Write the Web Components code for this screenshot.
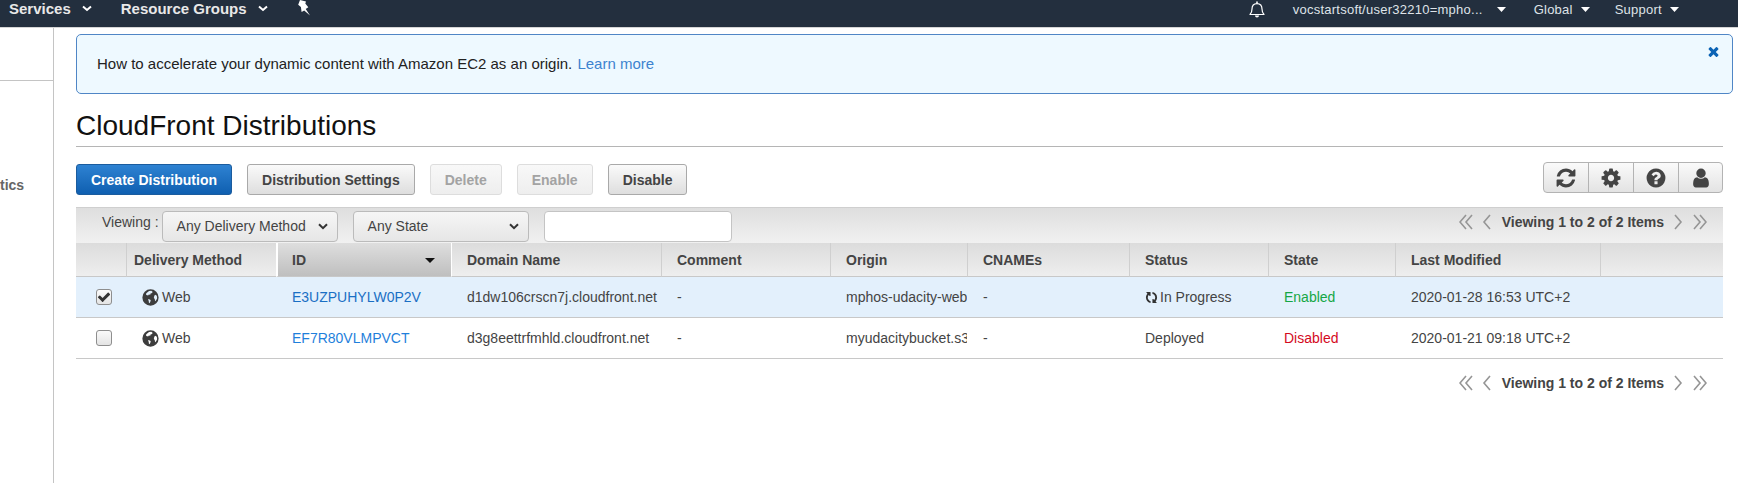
<!DOCTYPE html>
<html>
<head>
<meta charset="utf-8">
<title>CloudFront Distributions</title>
<style>
  html, body { margin: 0; height: 100%; overflow: hidden; background: #fff; }
  body { font-family: "Liberation Sans", Arial, sans-serif; color: #444; display: flex; flex-direction: column; }
</style>
</head>
<body>
<aws-nav></aws-nav>
<aws-shell>
  <aws-sidebar slot="side"></aws-sidebar>
  <aws-banner>How to accelerate your dynamic content with Amazon EC2 as an origin. <a>Learn more</a></aws-banner>
  <aws-title>CloudFront Distributions</aws-title>
  <aws-toolbar>
    <aws-button variant="primary">Create Distribution</aws-button>
    <aws-button>Distribution Settings</aws-button>
    <aws-button variant="disabled">Delete</aws-button>
    <aws-button variant="disabled">Enable</aws-button>
    <aws-button>Disable</aws-button>
  </aws-toolbar>
  <dist-table></dist-table>
  <aws-pager class="bottom"></aws-pager>
</aws-shell>

<script>
const ICONS = {
  refresh: 'M1639 1056q0 5-1 7-64 268-268 434.5t-478 166.5q-146 0-282.5-55t-243.5-157l-129 129q-19 19-45 19t-45-19-19-45v-448q0-26 19-45t45-19h448q26 0 45 19t19 45-19 45l-137 137q71 66 161 102t187 36q134 0 250-65t186-179q11-17 53-117 8-23 30-23h192q13 0 22.5 9.5t9.5 22.5zm25-800v448q0 26-19 45t-45 19h-448q-26 0-45-19t-19-45 19-45l138-138q-148-137-349-137-134 0-250 65t-186 179q-11 17-53 117-8 23-30 23h-199q-13 0-22.5-9.5t-9.5-22.5v-7q65-268 270-434.5t480-166.5q146 0 284 55.5t245 156.5l130-129q19-19 45-19t45 19 19 45z',
  cog: 'M1152 896q0-106-75-181t-181-75-181 75-75 181 75 181 181 75 181-75 75-181zm512-109v222q0 12-8 23t-20 13l-185 28q-19 54-39 91 35 50 107 138 10 12 10 25t-9 23q-27 37-99 108t-94 71q-12 0-26-9l-138-108q-44 23-91 38-16 136-29 186-7 28-36 28h-222q-14 0-24.5-8.5t-11.5-21.5l-28-184q-49-16-90-37l-141 107q-10 9-25 9-14 0-25-11-126-114-165-168-7-10-7-23 0-12 8-23 15-21 51-66.5t54-70.5q-27-50-41-99l-183-27q-13-2-21-12.5t-8-23.5v-222q0-12 8-23t19-13l186-28q14-46 39-92-40-57-107-138-10-12-10-24 0-10 9-23 26-36 98.5-107.5t94.5-71.5q13 0 26 10l138 107q44-23 91-38 16-136 29-186 7-28 36-28h222q14 0 24.5 8.5t11.5 21.5l28 184q49 16 90 37l142-107q9-9 24-9 13 0 25 10 129 119 165 170 7 8 7 22 0 12-8 23-15 21-51 66.5t-54 70.5q26 50 41 98l183 28q13 2 21 12.5t8 23.5z',
  help: 'M1024 1376v-192q0-14-9-23t-23-9h-192q-14 0-23 9t-9 23v192q0 14 9 23t23 9h192q14 0 23-9t9-23zm256-672q0-88-55.5-163t-138.5-116-170-41q-243 0-371 213-15 24 8 42l132 100q7 6 19 6 16 0 25-12 53-68 86-92 34-24 86-24 48 0 85.5 26t37.5 59q0 38-20 61t-68 45q-63 28-115.5 86.5t-52.5 125.5v36q0 14 9 23t23 9h192q14 0 23-9t9-23q0-19 21.5-49.5t54.5-49.5q32-18 49-28.5t46-35 44.5-48 28-60.5 12.5-81zm384 192q0 209-103 385.5t-279.5 279.5-385.5 103-385.5-103-279.5-279.5-103-385.5 103-385.5 279.5-279.5 385.5-103 385.5 103 279.5 279.5 103 385.5z',
  user: 'M1536 1399q0 109-62.5 187t-150.5 78h-854q-88 0-150.5-78t-62.5-187q0-85 8.5-160.5t31.5-152 58.5-131 94-89 134.5-34.5q131 128 313 128t313-128q76 0 134.5 34.5t94 89 58.5 131 31.5 152 8.5 160.5zm-256-887q0 159-112.5 271.5t-271.5 112.5-271.5-112.5-112.5-271.5 112.5-271.5 271.5-112.5 271.5 112.5 112.5 271.5z',
  times: 'M1490 1322q0 40-28 68l-136 136q-28 28-68 28t-68-28l-294-294-294 294q-28 28-68 28t-68-28l-136-136q-28-28-28-68t28-68l294-294-294-294q-28-28-28-68t28-68l136-136q28-28 68-28t68 28l294 294 294-294q28-28 68-28t68 28l136 136q28 28 28 68t-28 68l-294 294 294 294q28 28 28 68z',
  check: 'M1671 566q0 40-28 68l-724 724-136 136q-28 28-68 28t-68-28l-136-136-362-362q-28-28-28-68t28-68l136-136q28-28 68-28t68 28l294 295 656-657q28-28 68-28t68 28l136 136q28 28 28 68z',
  // globe: dark disc with small white land shapes cut out
  globe: 'M896 128a768 768 0 1 0 0 1536a768 768 0 1 0 0-1536zM760 290l210-20 120 90-40 100-150 50-30 120-130-10-70 90-170-60-30-100 110-130zM1260 700l150-60 100 150 10 190-110 210-80 60-30-190-90-150zM680 1050l170 30 70 110-60 150-60 90-60-70-10-160-70-90z'
};

class FaIcon extends HTMLElement {
  connectedCallback() {
    const size = this.getAttribute('size') || 16;
    this.attachShadow({ mode: 'open' }).innerHTML = `
      <style>
        :host { display: inline-flex; width: ${size}px; height: ${size}px; flex: none; }
        svg { width: 100%; height: 100%; display: block; fill: currentColor; fill-rule: evenodd; }
      </style>
      <svg viewBox="0 0 1792 1792"><path d="${ICONS[this.getAttribute('name')]}"/></svg>`;
  }
}
customElements.define('fa-icon', FaIcon);

class AwsNav extends HTMLElement {
  connectedCallback() {
    const caret = '<svg class="caret" width="9" height="5" viewBox="0 0 9 5"><path d="M0 0h9L4.5 5z"/></svg>';
    const chev = '<svg class="chev" width="10" height="7" viewBox="0 0 10 7"><path d="M1 1.5l4 3.5 4-3.5" fill="none" stroke="#fff" stroke-width="2"/></svg>';
    this.attachShadow({ mode: 'open' }).innerHTML = `
      <style>
        :host { display: flex; flex: none; height: 28px; box-sizing: border-box; background: #232f3e; color: #fff;
                border-bottom: 1px solid #d5d5d5; padding: 0 0 9px 9px; align-items: center; }
        .main { font-size: 15px; font-weight: bold; color: #e8e8e8; display: flex; align-items: center; margin-bottom: 2px; }
        .chev { margin-left: 11px; }
        .groups { margin-left: 29px; }
        .pin { margin-left: 29px; margin-bottom: 2px; }
        .right { margin-left: auto; display: flex; align-items: center; font-size: 13px; color: #dfe3e8; letter-spacing: 0.25px; }
        .caret { fill: #fff; margin-left: 8px; }
        .caret.first { margin-left: 14px; }
        .caret.last { margin-right: 59px; }
        .bell { margin-right: 28px; }
        .global { margin-left: 28px; }
        .support { margin-left: 25px; }
        span { white-space: nowrap; }
      </style>
      <span class="main">Services${chev}</span>
      <span class="main groups">Resource Groups${chev}</span>
      <svg class="pin" width="14" height="16" viewBox="0 0 14 16"><path d="M3 0l6 1.6-.7 2 3 3.6-2.6 1.8L13 15.5 7.2 10.4 4.6 12l-.7-5L1.2 4.8z" fill="#fff"/></svg>
      <div class="right">
        <svg class="bell" width="16" height="17" viewBox="0 0 16 17"><path d="M1 13.5c1.6-1.6 2-3 2-5.5 0-3 1.8-5.4 5-5.4s5 2.4 5 5.4c0 2.5.4 3.9 2 5.5z" fill="none" stroke="#fff" stroke-width="1.2" stroke-linejoin="round"/><path d="M6 14.5h4c0 1.2-.9 2-2 2s-2-.8-2-2zM7.2 1a.8.8 0 0 1 1.6 0v1.6H7.2z" fill="#fff"/></svg>
        <span>vocstartsoft/user32210=mpho...</span>${caret.replace('"caret"', '"caret first"')}
        <span class="global">Global</span>${caret}
        <span class="support">Support</span>${caret.replace('"caret"', '"caret last"')}
      </div>`;
  }
}
customElements.define('aws-nav', AwsNav);

class AwsShell extends HTMLElement {
  connectedCallback() {
    this.attachShadow({ mode: 'open' }).innerHTML = `
      <style>
        :host { display: flex; flex: 1; min-height: 0; }
        main { flex: 1; min-width: 0; padding: 6px 15px 0 22px; display: flex; flex-direction: column; }
      </style>
      <slot name="side"></slot>
      <main><slot></slot></main>`;
  }
}
customElements.define('aws-shell', AwsShell);

class AwsSidebar extends HTMLElement {
  connectedCallback() {
    this.attachShadow({ mode: 'open' }).innerHTML = `
      <style>
        :host { display: block; flex: none; width: 53px; border-right: 1px solid #c4c4c4; overflow: hidden; }
        .top { height: 52px; border-bottom: 1px solid #c4c4c4; }
        .item { margin-top: 96px; font-size: 14px; font-weight: bold; color: #666; line-height: 16px; }
      </style>
      <div class="top"></div>
      <div class="item">tics</div>`;
  }
}
customElements.define('aws-sidebar', AwsSidebar);

class AwsBanner extends HTMLElement {
  connectedCallback() {
    this.attachShadow({ mode: 'open' }).innerHTML = `
      <style>
        :host { display: flex; position: relative; height: 60px; box-sizing: border-box; margin-right: -10px; padding: 0 20px 2px;
                align-items: center; background: #eef9ff; border: 1px solid #4f86c6; border-radius: 5px;
                font-size: 15px; color: #222; }
        ::slotted(a) { color: #3d83cf; margin-left: 1px; }
        fa-icon { position: absolute; top: 9px; right: 11px; color: #0b63b5; }
        div { white-space: pre-wrap; }
      </style>
      <div><slot></slot></div>
      <fa-icon name="times" size="15"></fa-icon>`;
  }
}
customElements.define('aws-banner', AwsBanner);

class AwsTitle extends HTMLElement {
  connectedCallback() {
    this.attachShadow({ mode: 'open' }).innerHTML = `
      <style>
        :host { display: block; height: 53px; box-sizing: border-box; border-bottom: 1px solid #b5b5b5;
                padding-top: 14px; font-size: 28px; line-height: 36px; color: #111; }
      </style>
      <slot></slot>`;
  }
}
customElements.define('aws-title', AwsTitle);

class AwsButton extends HTMLElement {
  connectedCallback() {
    this.attachShadow({ mode: 'open' }).innerHTML = `
      <style>
        :host { display: inline-flex; height: 31px; box-sizing: border-box; padding: 0 14px; align-items: center;
                border: 1px solid #a9a9a9; border-radius: 3px; background: linear-gradient(#fafafa, #dedede);
                font-size: 14px; font-weight: bold; color: #444; white-space: nowrap; }
        :host([variant=primary]) { background: linear-gradient(#2e82d2, #0f5fb0); border-color: #1b5c9e; color: #fff; }
        :host([variant=disabled]) { background: linear-gradient(#f8f8f8, #eeeeee); border-color: #ddd; color: #a3a3a3; }
      </style>
      <slot></slot>`;
  }
}
customElements.define('aws-button', AwsButton);

class AwsToolbar extends HTMLElement {
  connectedCallback() {
    const btn = n => `<div class="tool"><fa-icon name="${n}" size="22"></fa-icon></div>`;
    this.attachShadow({ mode: 'open' }).innerHTML = `
      <style>
        :host { display: flex; height: 60px; box-sizing: border-box; padding-top: 15px; align-items: flex-start; }
        .btns { display: flex; gap: 15px; padding-top: 2px; }
        .tools { margin-left: auto; display: flex; height: 31px; box-sizing: border-box; border: 1px solid #b3b3b3; border-radius: 4px;
                 background: linear-gradient(#fafafa, #e3e3e3); color: #444; }
        .tool { width: 45px; display: flex; align-items: center; justify-content: center; box-sizing: border-box; border-left: 1px solid #b3b3b3; }
        .tool:first-child { border-left: 0; width: 44px; }
        .tool:last-child { width: 44px; }
      </style>
      <div class="btns"><slot></slot></div>
      <div class="tools">${['refresh', 'cog', 'help', 'user'].map(btn).join('')}</div>`;
  }
}
customElements.define('aws-toolbar', AwsToolbar);

class AwsPager extends HTMLElement {
  connectedCallback() {
    const ang = (d, w) => `<svg width="${w}" height="16" viewBox="0 0 ${w} 16"><path d="${d}" fill="none" stroke="#959595" stroke-width="1.6"/></svg>`;
    this.attachShadow({ mode: 'open' }).innerHTML = `
      <style>
        :host { display: flex; align-items: center; justify-content: flex-end; padding-right: 16px; height: 16px;
                font-size: 14px; font-weight: bold; color: #444; white-space: nowrap; }
        :host(.bottom) { margin-top: 16px; }
        svg { display: block; }
        span { margin: 0 10px 0 11px; }
        .g { margin-left: 10px; }
        .h { margin-right: 9px; }
      </style>
      <div class="h">${ang('M7 1L1 8l6 7M13 1L7 8l6 7', 14)}</div>
      ${ang('M8 1L2 8l6 7', 9)}
      <span>Viewing 1 to 2 of 2 Items</span>
      ${ang('M1 1l6 7-6 7', 9)}
      <div class="g">${ang('M1 1l6 7-6 7M7 1l6 7-6 7', 14)}</div>`;
  }
}
customElements.define('aws-pager', AwsPager);

class AwsSelect extends HTMLElement {
  connectedCallback() {
    this.attachShadow({ mode: 'open' }).innerHTML = `
      <style>
        :host { display: flex; width: 176px; height: 31px; box-sizing: border-box; align-items: center; justify-content: space-between;
                padding: 0 9px 1px 14px; border: 1px solid #bbb; border-radius: 4px; background: linear-gradient(#f6f6f6, #e6e6e6);
                font-size: 14px; color: #444; white-space: nowrap; }
      </style>
      <slot></slot>
      <svg width="10" height="7" viewBox="0 0 10 7"><path d="M1 1.2l4 4 4-4" fill="none" stroke="#333" stroke-width="2"/></svg>`;
  }
}
customElements.define('aws-select', AwsSelect);

class DistTable extends HTMLElement {
  connectedCallback() {
    const cols = [50, 150, 175, 210, 169, 137, 162, 139, 127, 205, 123];
    const heads = ['', 'Delivery Method', 'ID', 'Domain Name', 'Comment', 'Origin', 'CNAMEs', 'Status', 'State', 'Last Modified', ''];
    const web = '<td class="method"><span class="web"><fa-icon name="globe" size="19"></fa-icon>Web</span></td>';
    this.attachShadow({ mode: 'open' }).innerHTML = `
      <style>
        :host { display: block; font-size: 14px; color: #444; }
        .filter { display: flex; height: 36px; box-sizing: border-box; align-items: flex-start; padding: 3px 0 0 26px;
                  background: linear-gradient(#dedede, #f1f1f1); border-top: 1px solid #cfcfcf; }
        .filter .label { margin-top: 3px; margin-right: 3px; }
        .filter aws-select + aws-select { margin-left: 15px; }
        .box { width: 188px; height: 31px; box-sizing: border-box; margin-left: 15px; background: #fff; border: 1px solid #c4c4c4; border-radius: 4px; }
        .filter aws-pager { margin-left: auto; margin-top: 3px; }
        table { width: 100%; table-layout: fixed; border-collapse: separate; border-spacing: 0; }
        th { height: 34px; box-sizing: border-box; padding: 0 0 0 15px; text-align: left; font-weight: bold; white-space: nowrap;
             background: linear-gradient(#dcdcdc, #eeeeee); border-bottom: 1px solid #c8c8c8; border-left: 1px solid #cfcfcf; position: relative; }
        th:first-child { border-left: 0; }
        th.method { padding-left: 7px; }
        th.sorted { background: linear-gradient(#dedede, #bfbfbf); border-left: 2px solid #fff; padding-left: 14px; }
        th.sorted + th { border-left: 1px solid #fff; }
        th.sorted svg { position: absolute; right: 16px; top: 15px; }
        td { height: 41px; box-sizing: border-box; padding: 0 0 0 16px; border-bottom: 1px solid #c8c8c8; white-space: nowrap; overflow: hidden; }
        tr.sel td { background: #e3f0fc; }
        td.method { padding-left: 15px; }
        td.check { padding: 0 0 0 20px; }
        .cb { width: 16px; height: 16px; box-sizing: border-box; border: 1px solid #8e8e8e; border-radius: 3px; background: linear-gradient(#fafafa, #e4e4e4);
              display: flex; align-items: center; justify-content: center; color: #333; }
        .web { display: flex; align-items: center; gap: 2px; }
        .web fa-icon { color: #3d3d3d; }
        a { color: #1f7fdb; }
        tr.sel a { color: #1a6fc4; }
        .prog { display: flex; align-items: center; gap: 2px; }
        .prog fa-icon { transform: rotate(90deg); color: #333; }
        .on { color: #15a745; }
        .off { color: #d40a1e; }
      </style>
      <div class="filter">
        <span class="label">Viewing :</span>
        <aws-select>Any Delivery Method</aws-select>
        <aws-select>Any State</aws-select>
        <div class="box"></div>
        <aws-pager></aws-pager>
      </div>
      <table>
        <colgroup>${cols.map(w => `<col style="width:${w}px">`).join('')}</colgroup>
        <thead><tr>${heads.map((h, i) => {
          if (i === 1) return `<th class="method">${h}</th>`;
          if (i === 2) return `<th class="sorted">${h}<svg width="10" height="5" viewBox="0 0 10 5"><path d="M0 0h10L5 5z" fill="#111"/></svg></th>`;
          return `<th>${h}</th>`;
        }).join('')}</tr></thead>
        <tbody>
          <tr class="sel">
            <td class="check"><div class="cb"><fa-icon name="check" size="14"></fa-icon></div></td>${web}
            <td><a>E3UZPUHYLW0P2V</a></td><td>d1dw106crscn7j.cloudfront.net</td><td>-</td><td>mphos-udacity-web</td><td>-</td>
            <td><span class="prog"><fa-icon name="refresh" size="13"></fa-icon>In Progress</span></td>
            <td class="on">Enabled</td><td>2020-01-28 16:53 UTC+2</td><td></td>
          </tr>
          <tr>
            <td class="check"><div class="cb"></div></td>${web}
            <td><a>EF7R80VLMPVCT</a></td><td>d3g8eettrfmhld.cloudfront.net</td><td>-</td><td>myudacitybucket.s3</td><td>-</td>
            <td>Deployed</td><td class="off">Disabled</td><td>2020-01-21 09:18 UTC+2</td><td></td>
          </tr>
        </tbody>
      </table>`;
  }
}
customElements.define('dist-table', DistTable);
</script>
</body>
</html>
